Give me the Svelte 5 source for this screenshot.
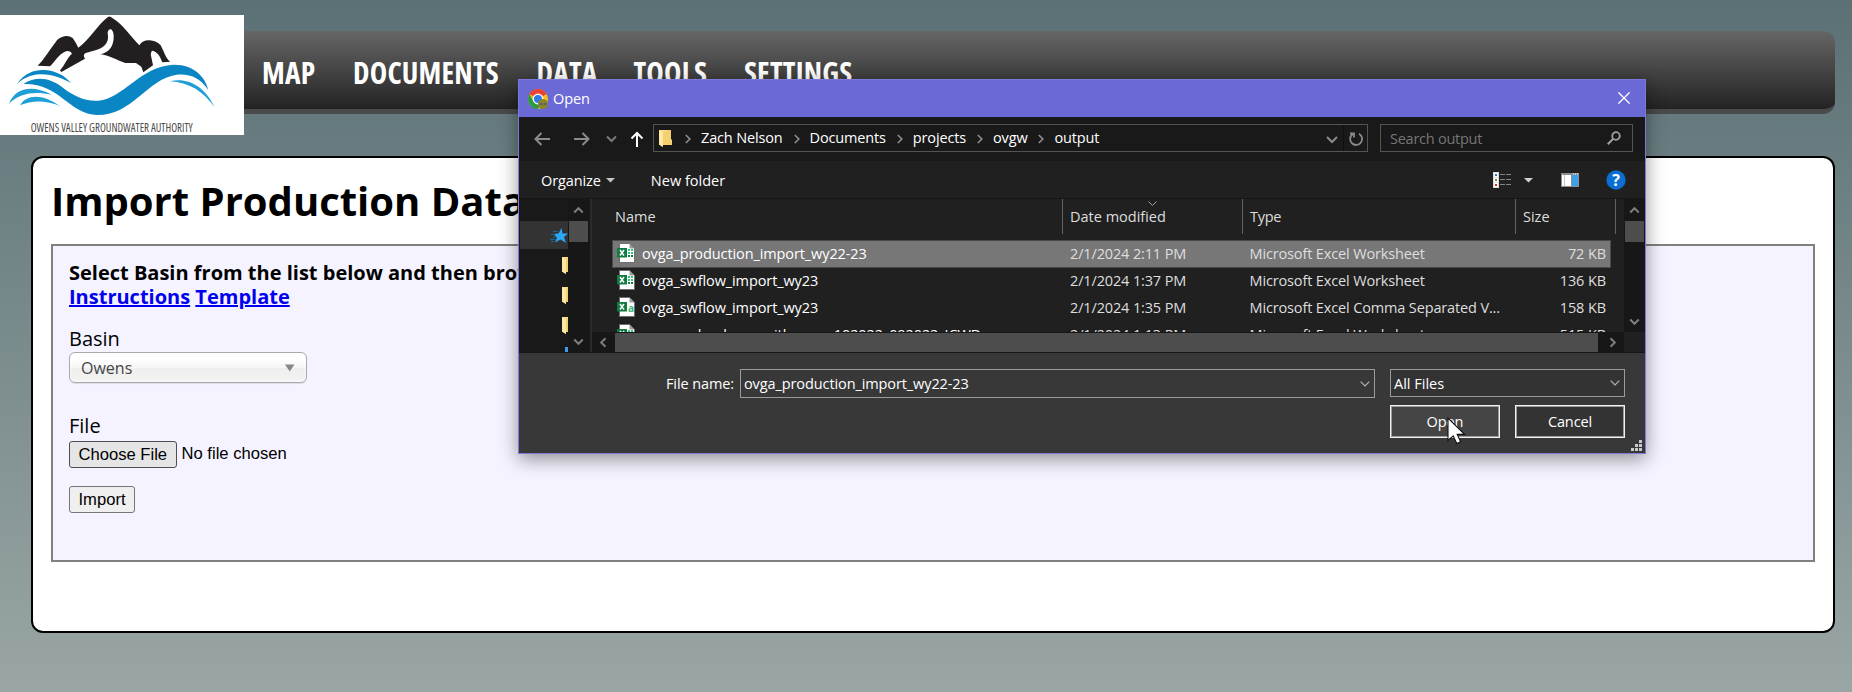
<script>
  const nav = ['MAP', 'DOCUMENTS', 'DATA', 'TOOLS', 'SETTINGS'];
  const crumbs = ['Zach Nelson', 'Documents', 'projects', 'ovgw', 'output'];
  const files = [
    { name: 'ovga_production_import_wy22-23', date: '2/1/2024 2:11 PM', type: 'Microsoft Excel Worksheet', size: '72 KB', selected: true },
    { name: 'ovga_swflow_import_wy23', date: '2/1/2024 1:37 PM', type: 'Microsoft Excel Worksheet', size: '136 KB' },
    { name: 'ovga_swflow_import_wy23', date: '2/1/2024 1:35 PM', type: 'Microsoft Excel Comma Separated V...', size: '158 KB', csv: true },
    { name: 'ovga_swland_use_with_area_102022_092022_ICWD', date: '2/1/2024 1:13 PM', type: 'Microsoft Excel Worksheet', size: '515 KB' }
  ];
</script>

{#snippet folder()}
  <svg class="folder" width="13" height="17" viewBox="0 0 13 17">
    <path d="M1 0H12V9L13 10V15H4V17L0 14.500V0z" fill="#f5d06f" />
    <path d="M0 0L4 2V17L0 14.500z" fill="#ffe9a2" />
    <path d="M4 2L8 0H0z" fill="#fbdd88" />
  </svg>
{/snippet}

{#snippet chevron(dir)}
  <svg class="sc" width="11" height="11" viewBox="0 0 11 11">
    <path d="M1.200 7.500L5.500 3.200L9.800 7.500" transform="rotate({dir} 5.500 5.500)" fill="none" stroke="#7d7d7d" stroke-width="2" />
  </svg>
{/snippet}

<div class="page">
  <header>
    <div class="logo">
      <svg width="244" height="120" viewBox="0 15 732 360">
        <path fill="#231f20" d="M113 167C132 148 150 118 172 89Q198 70 218 84Q228 98 235 113C268 90 292 45 324 21Q330 17 338 25C368 42 394 82 418 106Q428 90 448 91Q470 92 482 106C492 125 498 147 511 155L487 157C480 140 474 125 456 122Q450 130 454 142L459 166L430 187L424 170L408 159L376 159C350 150 324 135 302 133C330 126 342 105 341 77Q340 60 331 57Q323 60 323 70Q328 95 313 107C298 120 275 122 255 130Q248 137 255 146L184 186L180 181C195 165 200 145 216 131Q212 121 198 124C172 135 166 155 150 169Z" />
        <g fill="#0b86c4">
          <path d="M70 222C110 197 150 204 187 232C220 259 260 276 295 272C370 266 420 169 520 164C585 163 617 205 625 240C600 203 570 190 530 194C440 207 400 315 292 315C205 312 180 219 70 222Z" />
          <path d="M51 222C75 185 110 178 135 180C172 183 197 200 213 219C180 201 150 192 120 193C90 195 70 205 51 222Z" />
        </g>
        <g fill="#1f9fd6">
          <path d="M27 281C45 236 92 222 156 254C102 243 60 249 27 281Z" />
          <path d="M60 286C80 250 130 252 180 288C140 270 95 270 60 286Z" />
          <path d="M510 214C560 202 612 225 644 292C610 245 570 218 510 214Z" />
        </g>
        <text x="92" y="366" textLength="486" lengthAdjust="spacingAndGlyphs">OWENS VALLEY GROUNDWATER AUTHORITY</text>
      </svg>
    </div>
    <nav>{#each nav as n}<span>{n}</span>{/each}</nav>
  </header>

  <main>
    <h1>Import Production Data</h1>
    <section>
      <p class="intro">Select Basin from the list below and then browse<br /><a href="#i">Instructions</a> <a href="#t">Template</a></p>
      <div class="lab">Basin</div>
      <div class="chosen"><span>Owens</span><svg width="10" height="8" viewBox="0 0 10 8"><path d="M0 .5H9.500L4.750 7.500z" fill="#888" /></svg></div>
      <div class="lab file">File</div>
      <div class="pick"><span class="btn dark">Choose File</span><span>No file chosen</span></div>
      <span class="btn imp">Import</span>
    </section>
  </main>
</div>

<div class="dialog">
  <div class="title">
    <svg width="20" height="20" viewBox="0 0 20 20">
      <circle cx="10" cy="10" r="10" fill="#fbc116" />
      <path d="M10 10L1.340 5A10 10 0 0 1 18.660 5z" fill="#ea4335" />
      <path d="M1.340 5A10 10 0 0 0 10 20L14.300 12.500L5.700 12.500z" fill="#2c9a47" />
      <circle cx="10" cy="10" r="5.400" fill="#fff" />
      <circle cx="10" cy="10" r="4" fill="#2f7de9" />
      <circle cx="15" cy="15" r="5" fill="#8c8528" />
      <path d="M11.500 14h3v2h-3zM15.500 14h3v2h-3z" fill="#596070" />
    </svg>
    <span>Open</span>
    <svg class="close" width="12" height="12" viewBox="0 0 12 12"><path d="M.4 .4L11.600 11.600M11.600 .4L.4 11.600" stroke="#fff" stroke-width="1.300" /></svg>
  </div>

  <div class="navrow">
    <svg width="134" height="44" viewBox="519 117 134 44" fill="none" stroke-width="2">
      <path d="M550 139H536M541.500 133L535.500 139L541.500 145" stroke="#8b8b8b" />
      <path d="M574 139H588M582.500 133L588.500 139L582.500 145" stroke="#8b8b8b" />
      <path d="M607 136.500L611.500 141L616 136.500" stroke="#7b7b7b" />
      <path d="M637 147V133.500M631.500 138.500L637 133L642.500 138.500" stroke="#fff" />
    </svg>
    <div class="addr">
      {@render folder()}
      <div class="crumbs">
        {#each crumbs as c}
          <svg width="6" height="10" viewBox="0 0 6 10"><path d="M.8 1L4.800 5L.8 9" fill="none" stroke="#8b8b8b" stroke-width="1.700" /></svg><span>{c}</span>
        {/each}
      </div>
      <svg class="end" width="44" height="26" viewBox="1323 125 44 26" fill="none" stroke="#8b8b8b" stroke-width="2">
        <path d="M1327 137L1332 142L1337 137" />
        <path d="M1343.500 125V151" stroke="#101010" stroke-width="1" />
        <path d="M1359 133.700A6 6 0 1 1 1352.500 134.200M1350 133.500H1354V137.500" stroke-width="1.800" />
      </svg>
    </div>
    <div class="search">
      <span>Search output</span>
      <svg width="14" height="14" viewBox="0 0 14 14" fill="none" stroke="#a0a0a0"><circle cx="9" cy="5" r="3.800" stroke-width="1.800" /><path d="M6.200 7.800L.8 13.200" stroke-width="2" /></svg>
    </div>
  </div>

  <div class="tools">
    <span>Organize</span>
    <svg class="tri" width="9" height="5" viewBox="0 0 9 5"><path d="M0 0H9L4.500 4.500z" fill="#c4c4c4" /></svg>
    <span class="nf">New folder</span>
    <svg class="icons" width="134" height="22" viewBox="1492 169 134 22">
      <path d="M1493 172h6v16h-6z" fill="#ddd" />
      <path d="M1494 173h4v4h-4zM1494 178h4v4h-4zM1494 183h4v4h-4z" fill="#fff" />
      <path d="M1495 174h2v2h-2z" fill="#2a7bbf" /><path d="M1495 179h2v2h-2z" fill="#7e7f38" /><path d="M1495 184h2v2h-2z" fill="#c0392b" />
      <path d="M1500 174.500h5M1506 174.500h5M1500 179.500h5M1506 179.500h5M1500 184.500h5M1506 184.500h5" stroke="#858585" />
      <path d="M1524 178h9l-4.500 4.500z" fill="#d0d0d0" />
      <path d="M1561 173h18v14h-18z" fill="#8a8f94" />
      <path d="M1562 175h9v11h-9z" fill="#fff" /><path d="M1564.500 175v11" stroke="#c4c4c4" /><path d="M1572 175h6v11h-6z" fill="#3fa0ea" />
      <path d="M1573 174h1M1575 174h1M1577 174h1" stroke="#fff" />
      <circle cx="1616" cy="180" r="9.700" fill="#0a6fd0" />
      <text x="1616" y="186" text-anchor="middle">?</text>
    </svg>
  </div>

  <div class="content">
    <div class="tree">
      <div class="quick"><svg width="18" height="16" viewBox="0 0 18 16"><path d="M11.500 0L12.500 5.500H18L14 9L16 15L10.500 11.500L5 14.500L7 9.500L3.500 6L8.500 5.500z" fill="#2aa7f5" /><path d="M3 3.500h5M1 6.500h4M3 9h3M0 11.500h5M1 13.500h3" stroke="#17699c" /></svg></div>
      <div class="fold">{@render folder()}</div>
      <div class="fold">{@render folder()}</div>
      <div class="fold">{@render folder()}</div>
      <div class="blue"></div>
    </div>
    <div class="vs l">{@render chevron(0)}<i></i><b></b>{@render chevron(180)}</div>
    <div class="split"></div>
    <div class="list">
      <div class="top">
        <div class="rows">
          <div class="head">
            <span>Name</span><span class="h">Date modified<svg width="9" height="5" viewBox="0 0 9 5"><path d="M.5 .5L4.500 4.500L8.500 .5" fill="none" stroke="#a0a0a0" /></svg></span><span class="h ty">Type</span><span class="h">Size</span>
          </div>
          {#each files as f}
            <div class="row" class:sel={f.selected}>
              <svg width="18" height="20" viewBox="0 0 18 20">
                <path d="M2.500 .5H12.500L17.500 5.500V19.500H2.500z" fill="#fff" stroke="#6f6f6f" />
                <path d="M12.500 .5V5.500H17.500z" fill="#9a9a9a" />
                {#if f.csv}
                  <text class="a" x="11" y="15">a</text>
                {:else}
                  <path d="M11 6h2v2h-2zM14 6h2v2h-2zM11 9h2v2h-2zM14 9h2v2h-2z" fill="#33c481" />
                  <path d="M11 12h2v2h-2zM14 12h2v2h-2z" fill="#107c41" />
                {/if}
                <path d="M0 5h10v9.500H0z" fill="#107c41" />
                <path d="M3 7L7 12.500M7 7L3 12.500" stroke="#fff" stroke-width="1.500" />
              </svg>
              <span class="nm">{f.name}</span><span class="dt">{f.date}</span><span class="tp">{f.type}</span><span class="sz">{f.size}</span>
            </div>
          {/each}
        </div>
        <div class="vs r">{@render chevron(0)}<i></i><b></b>{@render chevron(180)}</div>
      </div>
      <div class="hs">{@render chevron(-90)}<i></i>{@render chevron(90)}<b></b></div>
    </div>
  </div>

  <div class="foot">
    <div class="line">
      <label for="fn">File name:</label>
      <div class="combo" id="fn"><span>ovga_production_import_wy22-23</span><svg width="10" height="6" viewBox="0 0 10 6"><path d="M.7 .7L5 5L9.300 .7" fill="none" stroke="#b4b4b4" stroke-width="1.200" /></svg></div>
      <div class="combo all"><span>All Files</span><svg width="10" height="6" viewBox="0 0 10 6"><path d="M.7 .7L5 5L9.300 .7" fill="none" stroke="#b4b4b4" stroke-width="1.200" /></svg></div>
    </div>
    <div class="acts"><div class="act hot">Open</div><div class="act">Cancel</div></div>
    <svg class="grip" width="11" height="11" viewBox="0 0 11 11" fill="#c9c9c9"><path d="M8 0h3v3h-3zM4 4h3v3h-3zM8 4h3v3h-3zM0 8h3v3h-3zM4 8h3v3h-3zM8 8h3v3h-3z" /></svg>
  </div>
</div>

<svg class="cursor" width="20" height="28" viewBox="0 0 20 28"><path d="M1 1V23.500L6.200 18.800L9.800 26.500L13.600 24.800L10.200 17.400H17.500z" fill="#fff" stroke="#111" stroke-width="1.100" /></svg>

<style>
  :global(body) { margin: 0; overflow: hidden; }
  .page { height: 692px; box-sizing: border-box; padding-top: 15px; background: linear-gradient(#5b7175, #9aa6a5); font-family: "Open Sans", sans-serif; }
  svg { display: block; flex: none; }
  header { display: flex; height: 120px; }
  .logo { width: 244px; background: #fff; }
  .logo text { font: 37px "Open Sans", sans-serif; font-stretch: 75%; fill: #4a4a4a; }
  nav { flex: 1; box-sizing: border-box; height: 83px; margin: 16px 17px 0 0; padding: 22px 0 0 18px; display: grid; grid-template-columns: 91px 183.5px 97px 110.5px auto; background: linear-gradient(#666, #232323); border-bottom: 5px solid #4a4a4a; border-radius: 0 12px 12px 0; }
  nav span { font: bold 29.5px/40px "Open Sans", sans-serif; font-stretch: 75%; letter-spacing: .2px; color: #fff; }
  main { box-sizing: border-box; height: 477px; margin: 21px 17px 0 31px; padding: 16px 18px 0; border: 2px solid #000; border-radius: 12px; background: #fff; }
  h1 { margin: 0 0 16px; font: bold 40px/54px "Open Sans", sans-serif; }
  section { box-sizing: border-box; height: 318px; padding: 15px 16px 0; border: 2px solid #808080; background: #f5f3ff; }
  p { margin: 0 0 18px; font: bold 20px/24px "Open Sans", sans-serif; }
  a { color: #00e; }
  .lab { font-size: 20px; line-height: 24px; }
  .chosen { box-sizing: border-box; width: 238px; height: 31px; margin: 1px 0 31px; padding: 0 11px; display: flex; align-items: center; justify-content: space-between; border: 1px solid #aaa; border-radius: 6px; background: linear-gradient(#fff 20%, #f6f6f6 50%, #eee 52%, #f4f4f4); box-shadow: 0 0 3px #fff inset, 0 1px 1px rgba(0,0,0,.1); color: #444; font-size: 16px; }
  .pick { display: flex; gap: 5px; margin: 3px 0 18px; font: 16.6px/25px "Liberation Sans", sans-serif; }
  .btn { display: inline-block; box-sizing: border-box; height: 27px; padding: 0 8.5px; border: 1px solid #767676; border-radius: 3px; background: #efefef; font: 16.6px/25px "Liberation Sans", sans-serif; }
  .dark { border-color: #4f4f4f; background: #e5e5e5; }

  .dialog { position: absolute; left: 518px; top: 79px; box-sizing: border-box; width: 1128px; height: 375px; border: 1px solid #7c78dc; background: #383838; color: #fff; font: 14.5px/20px "Open Sans", sans-serif; letter-spacing: -.1px; white-space: nowrap; box-shadow: 0 5px 18px rgba(0,0,0,.42); }
  .title { height: 37px; display: flex; align-items: center; gap: 5px; padding: 0 15px 0 9px; background: #6b69d6; }
  .close { margin: -1px 0 0 auto; }
  .navrow { height: 44px; display: flex; background: #191919; }
  .addr, .search { box-sizing: border-box; height: 28px; margin-top: 7px; border: 1px solid #535353; display: flex; align-items: center; }
  .addr { width: 715px; padding-left: 5px; }
  .crumbs { display: flex; align-items: center; margin-left: 13px; letter-spacing: -.15px; }
  .crumbs svg { margin-top: 1px; }
  .crumbs span { margin: 0 11px 0 10px; }
  .end { margin-left: auto; }
  .search { width: 253px; margin-left: 12px; padding: 0 11px 0 9px; justify-content: space-between; color: #767676; letter-spacing: -.25px; }
  .search span { padding-top: 1px; }
  .tools { box-sizing: border-box; height: 38px; padding: 1px 19px 0 22px; display: flex; align-items: center; background: #202020; border-bottom: 1px solid #161616; }
  .tools span { padding-top: 1px; }
  .tri { margin-left: 5px; }
  .nf { margin-left: 36px; letter-spacing: 0; }
  .icons { margin-left: auto; }
  .icons text { font: bold 16px "Open Sans", sans-serif; fill: #fff; }
  .content { height: 154px; display: flex; border-bottom: 1px solid #161616; box-sizing: border-box; background: #202020; }
  .tree { width: 49px; overflow: hidden; background: #191919; padding-top: 22px; box-sizing: border-box; }
  .quick { height: 28px; margin-left: 1px; background: #333; display: flex; justify-content: flex-end; align-items: center; padding-top: 1px; box-sizing: border-box; }
  .fold { height: 30px; padding: 8px 0 0 43px; box-sizing: border-box; }
  .blue { width: 3px; height: 6px; margin: 8px 0 0 46px; background: #3d9be8; }
  .vs { width: 22px; box-sizing: border-box; padding: 6px 0; display: flex; flex-direction: column; align-items: center; background: #171717; }
  .vs i { width: 19px; height: 21px; margin-top: 5px; background: #4d4d4d; }
  .vs b { flex: 1; }
  .vs.l { padding-right: 1px; padding-bottom: 5px; }
  .split { width: 2px; background: #2b2b2b; }
  .list { flex: 1; min-width: 0; display: flex; flex-direction: column; }
  .top { height: 133px; display: flex; }
  .rows { flex: 1; min-width: 0; overflow: hidden; padding-left: 20px; }
  .vs.r { width: 21px; padding-bottom: 5px; }
  .head { height: 33px; margin-bottom: 8px; display: grid; grid-template-columns: 450px 180px 273px 101px; color: #dedede; letter-spacing: 0; line-height: 35px; }
  .head span:first-child { padding-left: 3px; }
  .head .h { border-left: 1px solid #636363; padding-left: 7px; position: relative; }
  .head .h:last-child { border-right: 1px solid #636363; }
  .head .ty { letter-spacing: -.3px; }
  .head svg { position: absolute; left: 85px; top: 2px; }
  .row { width: 999px; height: 27px; box-sizing: border-box; padding: 0 5px; display: grid; grid-template-columns: 25px 428px 179.5px 1fr 80px; line-height: 27px; align-items: center; color: #dedede; }
  .row span { padding-top: 1px; line-height: 26px; }
  .row svg { margin-top: -1px; }
  .sel { height: 28px; margin-bottom: -1px; padding-bottom: 1px; background: #777; box-shadow: 0 0 0 1px #4a4a4a inset; }
  .nm { color: #fff; }
  .dt { letter-spacing: -.14px; }
  .tp { letter-spacing: -.14px; }
  .sz { text-align: right; }
  .a { font: bold 10px "Open Sans", sans-serif; fill: #33b878; }
  .hs { height: 20px; display: flex; align-items: center; background: #171717; padding-left: 6px; }
  .hs i { width: 983px; height: 19px; margin: 1px 9px 0 6px; background: #4d4d4d; }
  .hs b { width: 21px; height: 20px; margin-left: auto; background: #202020; }
  .foot { padding-top: 16px; }
  .line { display: flex; align-items: flex-start; }
  label { width: 215px; padding-right: 6px; text-align: right; line-height: 29px; }
  .combo { box-sizing: border-box; width: 635px; height: 29px; padding: 0 4px 0 3px; display: flex; align-items: center; justify-content: space-between; border: 1px solid #9b9b9b; }
  .all { width: 235px; height: 28px; margin-left: 15px; background: #333; letter-spacing: 0; }
  .all span { padding-top: 1px; }
  .acts { display: flex; gap: 15px; margin: 7px 0 0 871px; }
  .act { box-sizing: border-box; width: 110px; height: 33px; border: 1px solid #f2f2f2; box-shadow: 0 0 0 1px #9b9b9b inset; background: #333; text-align: center; line-height: 31px; }
  .hot { background: #454545; }
  .grip { position: absolute; right: 3px; bottom: 2px; }
  .cursor { position: absolute; left: 1447px; top: 417px; }
</style>
